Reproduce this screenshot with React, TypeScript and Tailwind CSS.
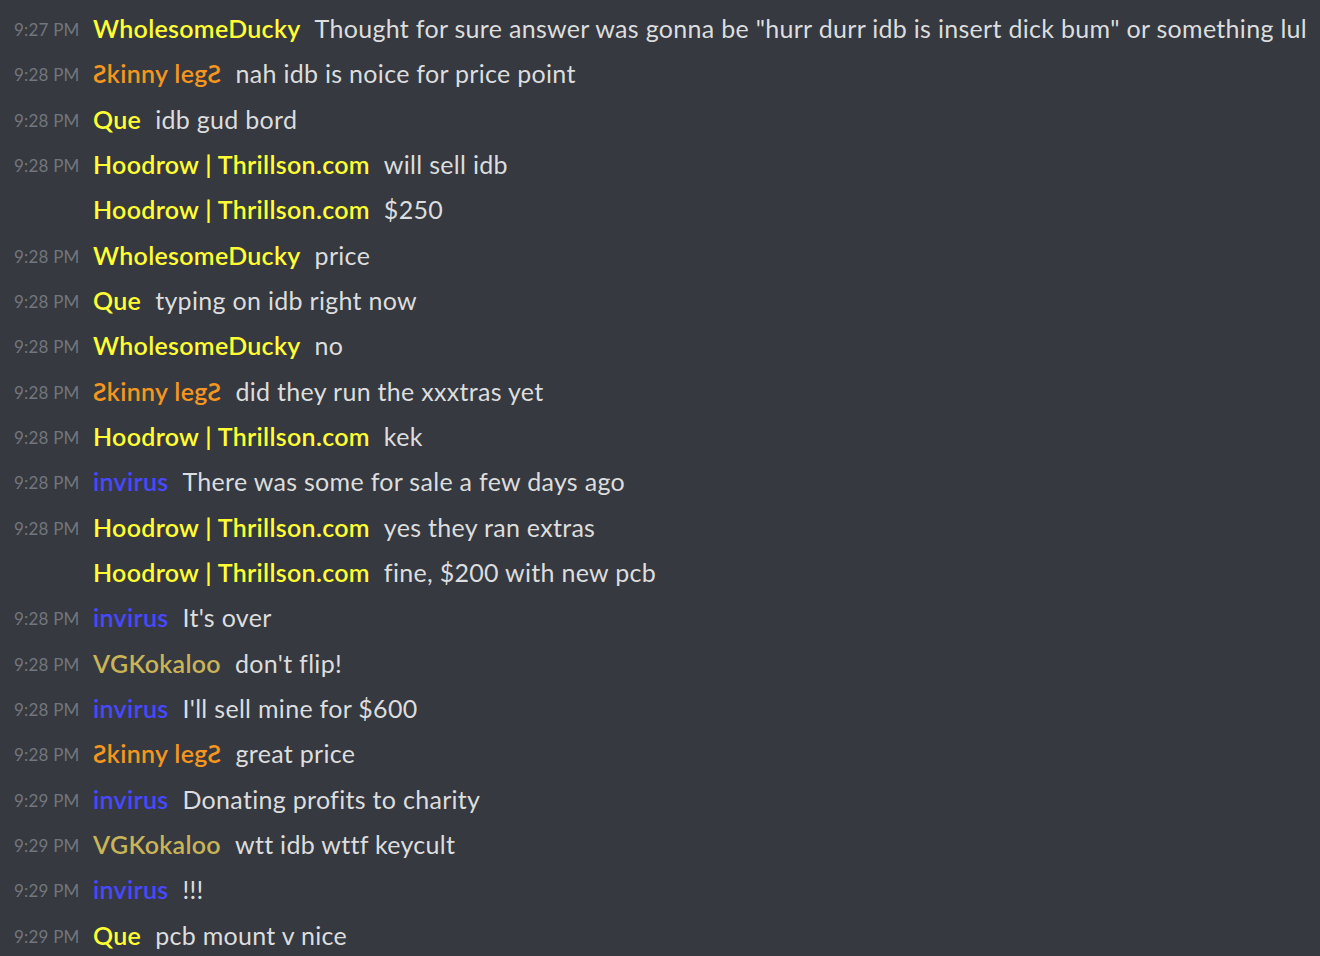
import React from "react";

type Msg = { t: string; n: string; c: string; m: string };

const Y = "text-[#ffff33]";
const O = "text-[#f5961e]";
const B = "text-[#4848ff]";
const G = "text-[#c9b458]";

const msgs: Msg[] = [
  { t: "9:27 PM", n: "WholesomeDucky", c: Y, m: 'Thought for sure answer was gonna be "hurr durr idb is insert dick bum" or something lul' },
  { t: "9:28 PM", n: "Ƨkinny legƧ", c: O, m: "nah idb is noice for price point" },
  { t: "9:28 PM", n: "Que", c: Y, m: "idb gud bord" },
  { t: "9:28 PM", n: "Hoodrow | Thrillson.com", c: Y, m: "will sell idb" },
  { t: "", n: "Hoodrow | Thrillson.com", c: Y, m: "$250" },
  { t: "9:28 PM", n: "WholesomeDucky", c: Y, m: "price" },
  { t: "9:28 PM", n: "Que", c: Y, m: "typing on idb right now" },
  { t: "9:28 PM", n: "WholesomeDucky", c: Y, m: "no" },
  { t: "9:28 PM", n: "Ƨkinny legƧ", c: O, m: "did they run the xxxtras yet" },
  { t: "9:28 PM", n: "Hoodrow | Thrillson.com", c: Y, m: "kek" },
  { t: "9:28 PM", n: "invirus", c: B, m: "There was some for sale a few days ago" },
  { t: "9:28 PM", n: "Hoodrow | Thrillson.com", c: Y, m: "yes they ran extras" },
  { t: "", n: "Hoodrow | Thrillson.com", c: Y, m: "fine, $200 with new pcb" },
  { t: "9:28 PM", n: "invirus", c: B, m: "It's over" },
  { t: "9:28 PM", n: "VGKokaloo", c: G, m: "don't flip!" },
  { t: "9:28 PM", n: "invirus", c: B, m: "I'll sell mine for $600" },
  { t: "9:28 PM", n: "Ƨkinny legƧ", c: O, m: "great price" },
  { t: "9:29 PM", n: "invirus", c: B, m: "Donating profits to charity" },
  { t: "9:29 PM", n: "VGKokaloo", c: G, m: "wtt idb wttf keycult" },
  { t: "9:29 PM", n: "invirus", c: B, m: "!!!" },
  { t: "9:29 PM", n: "Que", c: Y, m: "pcb mount v nice" },
];

export default function App() {
  return (
    <div
      className="w-[1320px] h-[956px] overflow-hidden bg-[#36393f] pt-[6px] [font-variant-ligatures:none]"
      style={{ fontFamily: "Lato, 'Noto Sans', sans-serif" }}
    >
      {msgs.map((x, i) => (
        <div key={i} className="flex items-center h-[45.35px] whitespace-nowrap">
          <div className="w-[93px] pl-[14px] shrink-0 text-[17px] tracking-[0.2px] text-[#72767d] pt-[2px]">{x.t}</div>
          <div className={`text-[25px] tracking-[0.3px] font-semibold ${x.c}`}>{x.n}</div>
          <div className="ml-[14px] text-[25px] tracking-[0.3px] text-[#dcddde]">{x.m}</div>
        </div>
      ))}
    </div>
  );
}
